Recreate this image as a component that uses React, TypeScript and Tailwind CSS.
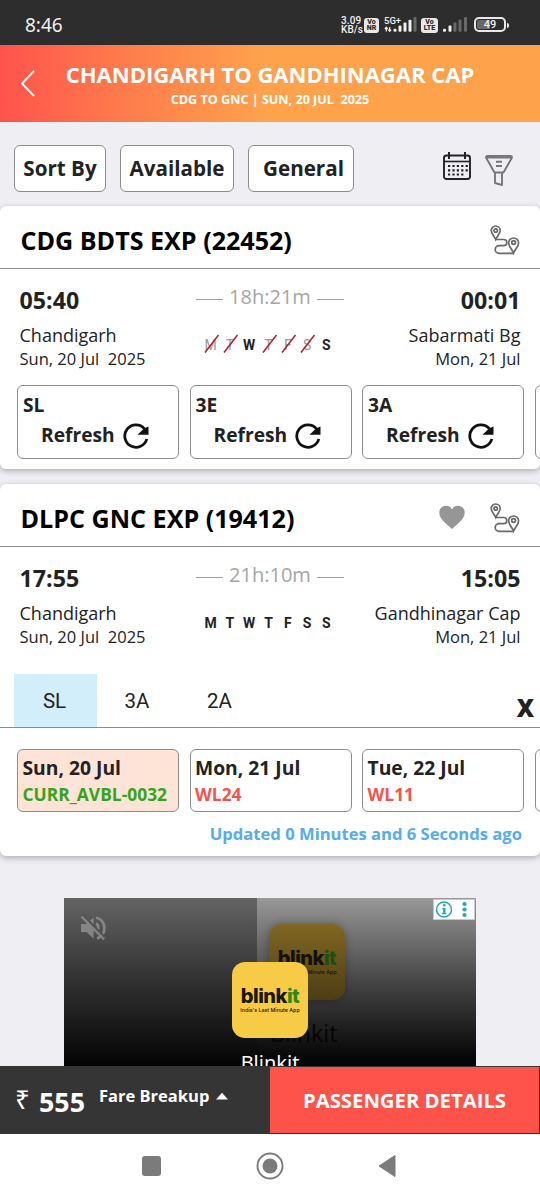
import type { ReactNode } from "react";

const days = ["M", "T", "W", "T", "F", "S", "S"];

function StatusBar() {
  return (
    <div className="h-[45px] bg-[#2d2d2d] text-[#f0f0f0] flex items-center justify-between pl-[25px] pr-[31px] pt-[5px]">
      <span className="text-[19px] leading-[24px] font-['Noto_Sans']">8:46</span>
      <div className="flex items-center font-['Roboto'] font-bold">
        <div className="w-[23px] text-[10px] leading-[9.5px] -ml-px tracking-[0.1px] font-medium">
          <div>3.09</div>
          <div>KB/s</div>
        </div>
        <div className="w-[15px] h-[15px] mr-px rounded-[3px] bg-[#e8e8e8] text-[#2d2d2d] text-[7px] leading-[6.5px] font-black flex flex-col items-center justify-center">
          <span>Vo</span>
          <span>NR</span>
        </div>
        <svg width="35" height="18" viewBox="0 0 35 18" className="ml-[4px]">
          <text x="0" y="7.500" fontSize="9.5" fontWeight="500" fill="#f0f0f0">5G+</text>
          <path d="M2.300 15.500v-4M.900 13l1.400-1.700L3.700 13M5.700 11v4M4.300 13.600l1.400 1.700 1.400-1.700" stroke="#f0f0f0" strokeWidth="1.200" fill="none" />
          <g fill="#f0f0f0">
            <rect x="9.500" y="12.700" width="3" height="3" rx="1" />
            <rect x="14.500" y="9.500" width="3" height="6.200" rx="1" />
            <rect x="19.500" y="6.500" width="3" height="9.200" rx="1" />
            <rect x="24.500" y="3.700" width="3" height="12" rx="1" />
          </g>
          <rect x="29.500" y="1" width="3" height="14.700" rx="1" fill="#696969" />
        </svg>
        <div className="w-[17px] h-[15px] ml-[2px] mr-px rounded-[3px] bg-[#e8e8e8] text-[#2d2d2d] text-[7px] leading-[6.5px] font-black flex flex-col items-center justify-center">
          <span>Vo</span>
          <span>LTE</span>
        </div>
        <svg width="26" height="18" viewBox="0 0 26 18" className="ml-[4px]">
          <rect x="0" y="12.700" width="3" height="3" rx="1" fill="#f0f0f0" />
          <rect x="5.500" y="9.500" width="3" height="6.200" rx="1" fill="#f0f0f0" />
          <g fill="#696969">
            <rect x="10.500" y="6.500" width="3" height="9.200" rx="1" />
            <rect x="15.500" y="3.700" width="3" height="12" rx="1" />
            <rect x="21" y="1" width="3" height="14.700" rx="1" />
          </g>
        </svg>
        <div className="w-[32px] h-[15px] ml-[5px] mb-px rounded-[5px] border-2 border-[#e8e8e8] p-px flex">
          <div className="w-full rounded-[2px] bg-[linear-gradient(90deg,#686868_49%,transparent_49%)] text-[11px] leading-[10px] text-center font-medium">49</div>
        </div>
        <div className="w-[2px] h-[5px] ml-[1px] rounded-r bg-[#e8e8e8]" />
      </div>
    </div>
  );
}

function Header() {
  return (
    <div className="h-[77px] bg-[linear-gradient(90deg,#fe534c_0px,#fe7b4c_120px,#fea24c_265px)] text-white relative flex flex-col items-center pt-[16px]">
      <svg width="16" height="28" viewBox="0 0 16 28" className="absolute left-[20px] top-[25px]" fill="none" stroke="white" strokeWidth="1.900">
        <path d="M14 1 2 13.500 14 26" />
      </svg>
      <h1 className="text-[22px] leading-[27px] font-bold whitespace-nowrap">CHANDIGARH TO GANDHINAGAR CAP</h1>
      <p className="text-[12.600px] leading-[20px] mt-[2px] font-bold whitespace-pre">CDG TO GNC | SUN, 20 JUL  2025</p>
    </div>
  );
}

function CalendarIcon() {
  return (
    <svg width="28" height="29" viewBox="0 0 28 29" fill="none" stroke="#222226" strokeWidth="1.900">
      <rect x="1" y="3.500" width="26" height="23.500" rx="2.500" />
      <path d="M1 9.500h26" strokeWidth="1.600" />
      <path d="M6 0v7M22 0v7" strokeWidth="2" />
      <path d="M5 14h20M5 18.300h20M5 22.500h15.500" strokeWidth="2.200" strokeDasharray="2.200 2.200" />
    </svg>
  );
}

function FunnelIcon() {
  return (
    <svg width="28" height="31" viewBox="0 0 28 31" fill="none" stroke="#77777b" strokeWidth="1.900" strokeLinejoin="round">
      <path d="M1 2.500Q1 1 2.500 1h23Q27 1 27 2.500L18.500 17.500h-9ZM1 2.500h26" />
      <path d="M10 17.500v10.500l7 2v-12.500" />
      <path d="M11 6.700h6M11 11h6" />
    </svg>
  );
}

function RouteIcon() {
  return (
    <svg width="30" height="30" viewBox="0 0 30 30" fill="none" stroke="#69696b" strokeWidth="1.700">
      <path d="M5.700 14.500C4.200 11 1.200 8.500 1.200 5.500a4.500 4.500 0 0 1 9 0c0 3-3 5.500-4.500 9Z" />
      <circle cx="5.700" cy="5.500" r="1.700" />
      <path d="M5.700 14.500h8a3.100 3.100 0 0 1 0 6.200H9a3.800 3.800 0 0 0 0 7.600h15" />
      <path d="M23.600 28C22 24 18.600 21.500 18.600 18a5 5 0 0 1 10 0c0 3.500-3.400 6-5 10Z" />
      <circle cx="23.600" cy="17.500" r="1.900" />
    </svg>
  );
}

function RefreshIcon() {
  return (
    <svg width="26" height="26" viewBox="0 0 26 26">
      <path d="M23.800 16A11.200 11.200 0 1 1 21.500 5.800" fill="none" stroke="#111" strokeWidth="2.800" />
      <path d="M25.500 3.500v8.200H14.500L21 5.500Z" fill="#111" />
    </svg>
  );
}

function Filters() {
  return (
    <div className="h-[84px] flex items-start pt-[23px] pl-[14px] text-[20.6px] font-bold text-[#222]">
      <button className="w-[92px] h-[47px] bg-white border border-[#8c8c8e] rounded-[6px]">Sort By</button>
      <button className="w-[114px] h-[47px] ml-[14px] bg-white border border-[#8c8c8e] rounded-[6px]">Available</button>
      <button className="w-[106px] h-[47px] ml-[14px] pl-[5px] bg-white border border-[#8c8c8e] rounded-[6px]">General</button>
      <div className="ml-[89px] mt-[7px]">
        <CalendarIcon />
      </div>
      <div className="ml-[14px] mt-[10px]">
        <FunnelIcon />
      </div>
    </div>
  );
}

interface TrainProps {
  name: string;
  departure: string;
  arrival: string;
  duration: string;
  to: string;
  runsOn: boolean[];
  liked?: boolean;
  children: ReactNode;
}

function TrainCard({ name, departure, arrival, duration, to, runsOn, liked, children }: TrainProps) {
  return (
    <div className="bg-white rounded-[6px] shadow-[0_2px_6px_rgba(0,0,0,0.28)] overflow-hidden text-[#222]">
      <div className="h-[63px] border-b border-[#8c8c8c] flex items-center pl-[20.500px] pr-[20px] pt-[5px]">
        <h2 className="text-[25.1px] leading-[32px] font-bold text-black">{name}</h2>
        <div className="ml-auto flex items-center">
          {liked && (
            <svg width="26" height="24" viewBox="0 0 26 24" className="mr-[25px]">
              <path d="M13 23C5 16 .4 12.200.4 7.200A6.700 6.700 0 0 1 13 3.400 6.700 6.700 0 0 1 25.600 7.200C25.600 12.200 21 16 13 23Z" fill="#969696" />
            </svg>
          )}
          <RouteIcon />
        </div>
      </div>

      <div className="flex justify-between px-[19.500px] h-[115.500px]">
        <div className="pt-[15px] w-[150px]">
          <div className="text-[23.200px] leading-[32px] font-bold">{departure}</div>
          <div className="text-[18px] leading-[24px] mt-[7px]">Chandigarh</div>
          <div className="text-[16.500px] leading-[24px] whitespace-pre">Sun, 20 Jul  2025</div>
        </div>
        <div className="w-[150px] flex flex-col items-center pt-[16px]">
          <div className="flex items-center gap-[6px] text-[20px] leading-[24px] text-[#a5a5a5]">
            <span className="w-[27px] h-px mt-[4px] bg-[#a0a0a0]" />
            {duration}
            <span className="w-[27px] h-px mt-[4px] bg-[#a0a0a0]" />
          </div>
          <div className="grid grid-cols-7 w-[135px] mr-[3px] mt-[25px] text-[14px] leading-[22px] font-['Roboto'] font-bold text-center">
            {days.map((day, i) => (
              <span key={i} className={runsOn[i] ? "" : "relative font-normal text-[#999]"}>
                {day}
                {!runsOn[i] && (
                  <svg width="16" height="20" viewBox="0 0 16 20" className="absolute left-[3px] top-0">
                    <path d="M1 18.500 14.500 1" stroke="#b3202c" strokeWidth="1.500" />
                  </svg>
                )}
              </span>
            ))}
          </div>
        </div>
        <div className="pt-[15px] w-[150px] text-right">
          <div className="text-[23.200px] leading-[32px] font-bold">{arrival}</div>
          <div className="text-[18px] leading-[24px] mt-[7px] whitespace-nowrap">{to}</div>
          <div className="text-[16.500px] leading-[24px]">Mon, 21 Jul</div>
        </div>
      </div>
      {children}
    </div>
  );
}

function RefreshBox({ label }: { label: string }) {
  return (
    <div className="w-[162px] h-[74px] shrink-0 border border-[#8c8c8c] rounded-[6px] pl-[5px] pt-[6px] font-bold text-[19.200px]">
      <div className="leading-[26px] h-[26px]">{label}</div>
      <div className="flex items-center pl-[18px] h-[36px] gap-[8px]">
        Refresh
        <RefreshIcon />
      </div>
    </div>
  );
}

function Ad() {
  return (
    <div className="relative mt-[42px] mx-auto w-[412px] h-[168px] overflow-hidden bg-[linear-gradient(180deg,#646464,#353535_45%,#030303)] font-['Inter']">
      <div className="absolute right-0 top-0 w-[219px] h-full bg-[linear-gradient(180deg,#989898,#454545_50%,#060606_95%)]" />
      <svg width="26" height="26" viewBox="0 0 26 26" className="absolute left-[16px] top-[17px]">
        <path d="M1 9v8h5.500L13.500 23.500V2.500L6.500 9Z" fill="#858585" />
        <path d="M16 8.500c3 1.500 3 7 0 8.500M16 2.500c11 3 11 17 1 21" fill="none" stroke="#858585" strokeWidth="2.700" />
        <path d="M1.500-1 26 23.500" stroke="#535353" strokeWidth="2.500" />
        <path d="M1.500 1.500 24 24.500" stroke="#858585" strokeWidth="2.400" />
      </svg>
      <div className="absolute left-[205px] top-[26px] w-[76px] h-[76px] rounded-[13px] bg-[linear-gradient(180deg,#806722,#4d3d14)] shadow-[0_0_8px_rgba(0,0,0,0.3)] flex flex-col items-center pt-[23px] text-[#15110a]">
        <div className="text-[20px] leading-[22px] font-extrabold tracking-[-0.500px]">blink<span className="text-[#1c5010]">it</span></div>
        <div className="text-[5.300px] leading-[7px] font-medium whitespace-nowrap">India's Last Minute App</div>
      </div>
      <div className="absolute left-[206px] top-[122px] text-[23px] leading-[26px] font-['Noto_Sans'] text-[#060606]">Blinkit</div>
      <div className="absolute left-[168px] top-[64px] w-[76px] h-[76px] rounded-[13px] bg-[#f8cb46] flex flex-col items-center pt-[23px] text-[#1d1608]">
        <div className="text-[20px] leading-[22px] font-extrabold tracking-[-0.500px]">blink<span className="text-[#318616]">it</span></div>
        <div className="text-[5.300px] leading-[7px] font-medium whitespace-nowrap">India's Last Minute App</div>
      </div>
      <div className="absolute left-0 top-[152px] w-full text-center text-[20px] leading-[26px] font-['Noto_Sans'] text-white">Blinkit</div>
      <div className="absolute right-[1px] top-[1px] w-[42px] h-[21px] bg-white border border-[#c8c8c8]">
        <svg width="40" height="19" viewBox="0 0 40 19">
          <circle cx="10" cy="9.500" r="7.500" fill="none" stroke="#20a9ba" strokeWidth="1.500" />
          <path d="M10.300 8v6" fill="none" stroke="#20a9ba" strokeWidth="2.400" />
          <path d="M8.200 8.600h2M8 13.600h4.500" fill="none" stroke="#20a9ba" strokeWidth="1.200" />
          <circle cx="10.200" cy="5.300" r="1.300" fill="#20a9ba" />
          <circle cx="30.500" cy="4" r="2.100" fill="#20a9ba" />
          <circle cx="30.500" cy="9.500" r="2.100" fill="#20a9ba" />
          <circle cx="30.500" cy="15" r="2.100" fill="#20a9ba" />
        </svg>
      </div>
    </div>
  );
}

export default function App() {
  const fares = [
    { date: "Sun, 20 Jul", status: "CURR_AVBL-0032", free: true },
    { date: "Mon, 21 Jul", status: "WL24", free: false },
    { date: "Tue, 22 Jul", status: "WL11", free: false },
  ];

  return (
    <div className="w-[540px] h-[1200px] overflow-hidden bg-[#eeeef3] font-['Open_Sans',sans-serif] flex flex-col">
      <StatusBar />
      <Header />

      {/* Results */}
      <div className="h-[944px] overflow-hidden">
        <Filters />
        <TrainCard
          name="CDG BDTS EXP (22452)"
          departure="05:40"
          arrival="00:01"
          duration="18h:21m"
          to="Sabarmati Bg"
          runsOn={[false, false, true, false, false, false, true]}
        >
          <div className="flex gap-[10.500px] pl-[17px] h-[84.500px]">
            <RefreshBox label="SL" />
            <RefreshBox label="3E" />
            <RefreshBox label="3A" />
            <div className="w-[162px] h-[74px] shrink-0 border border-[#8c8c8c] rounded-[6px]" />
          </div>
        </TrainCard>
        <div className="h-[15px]" />
        <TrainCard
          name="DLPC GNC EXP (19412)"
          departure="17:55"
          arrival="15:05"
          duration="21h:10m"
          to="Gandhinagar Cap"
          runsOn={[true, true, true, true, true, true, true]}
          liked
        >
          <div className="h-[65.500px] pt-[11.500px] pl-[14px] border-b border-[#8c8c8c] flex font-['Roboto'] text-[20.500px] leading-[55px] text-center">
            <div className="w-[83px] bg-[#d1eefa] pr-[2px]">SL</div>
            <div className="w-[82px] pr-[2px]">3A</div>
            <div className="w-[82px] pr-px">2A</div>
            <div className="ml-auto pr-[6px] pt-[6px] font-['Open_Sans'] font-extrabold text-[24px]">X</div>
          </div>
          <div className="flex gap-[10.500px] pl-[17px] pt-[21px]">
            {fares.map((fare) => (
              <div
                key={fare.date}
                className={`w-[162px] h-[63px] shrink-0 border border-[#8c8c8c] rounded-[6px] pl-[4.500px] pt-[5px] font-bold ${
                  fare.free ? "bg-[#fee4d7]" : ""
                }`}
              >
                <div className="text-[19.300px] leading-[26px]">{fare.date}</div>
                <div className={`text-[17.400px] leading-[26px] ${fare.free ? "text-[#35a41c]" : "text-[#f0564e]"}`}>
                  {fare.status}
                </div>
              </div>
            ))}
            <div className="w-[162px] h-[63px] shrink-0 border border-[#8c8c8c] rounded-[6px]" />
          </div>
          <p className="text-right pr-[18px] pt-[10px] h-[44px] text-[16.600px] leading-[24px] font-bold text-[#56aceb]">
            Updated 0 Minutes and 6 Seconds ago
          </p>
        </TrainCard>
        <Ad />
      </div>

      {/* Fare bar */}
      <div className="h-[68px] bg-[#353535] text-white font-bold flex">
        <div className="w-[270px] flex items-start pl-[15px]">
          <span className="w-[24px] text-[26px] leading-[67px] font-medium">₹</span>
          <span className="text-[26.800px] leading-[71px]">555</span>
          <span className="ml-[14px] text-[16.500px] leading-[60px] whitespace-nowrap">Fare Breakup</span>
          <svg width="14" height="8" viewBox="0 0 14 8" className="ml-[6px] mt-[26px]">
            <path d="M1 7.500 7 .800 13 7.500Z" fill="white" />
          </svg>
        </div>
        <button className="flex-1 my-px mr-px bg-[#fe534b] text-[20.300px]">PASSENGER DETAILS</button>
      </div>

      {/* System navigation */}
      <div className="h-[66px] bg-white flex items-start pl-[142px] pt-[18px]">
        <div className="w-[19px] h-[20px] mt-[4px] rounded-[3px] bg-[#7b7b7b]" />
        <svg width="28" height="28" viewBox="0 0 28 28" className="ml-[95px]">
          <circle cx="14" cy="14" r="12.500" fill="none" stroke="#7b7b7b" strokeWidth="1.900" />
          <circle cx="14" cy="14" r="7.500" fill="#7b7b7b" />
        </svg>
        <svg width="20" height="24" viewBox="0 0 20 24" className="ml-[93px] mt-[2px]">
          <path d="M18 1.500v21L2 12Z" fill="#7b7b7b" stroke="#7b7b7b" strokeLinejoin="round" />
        </svg>
      </div>
    </div>
  );
}
